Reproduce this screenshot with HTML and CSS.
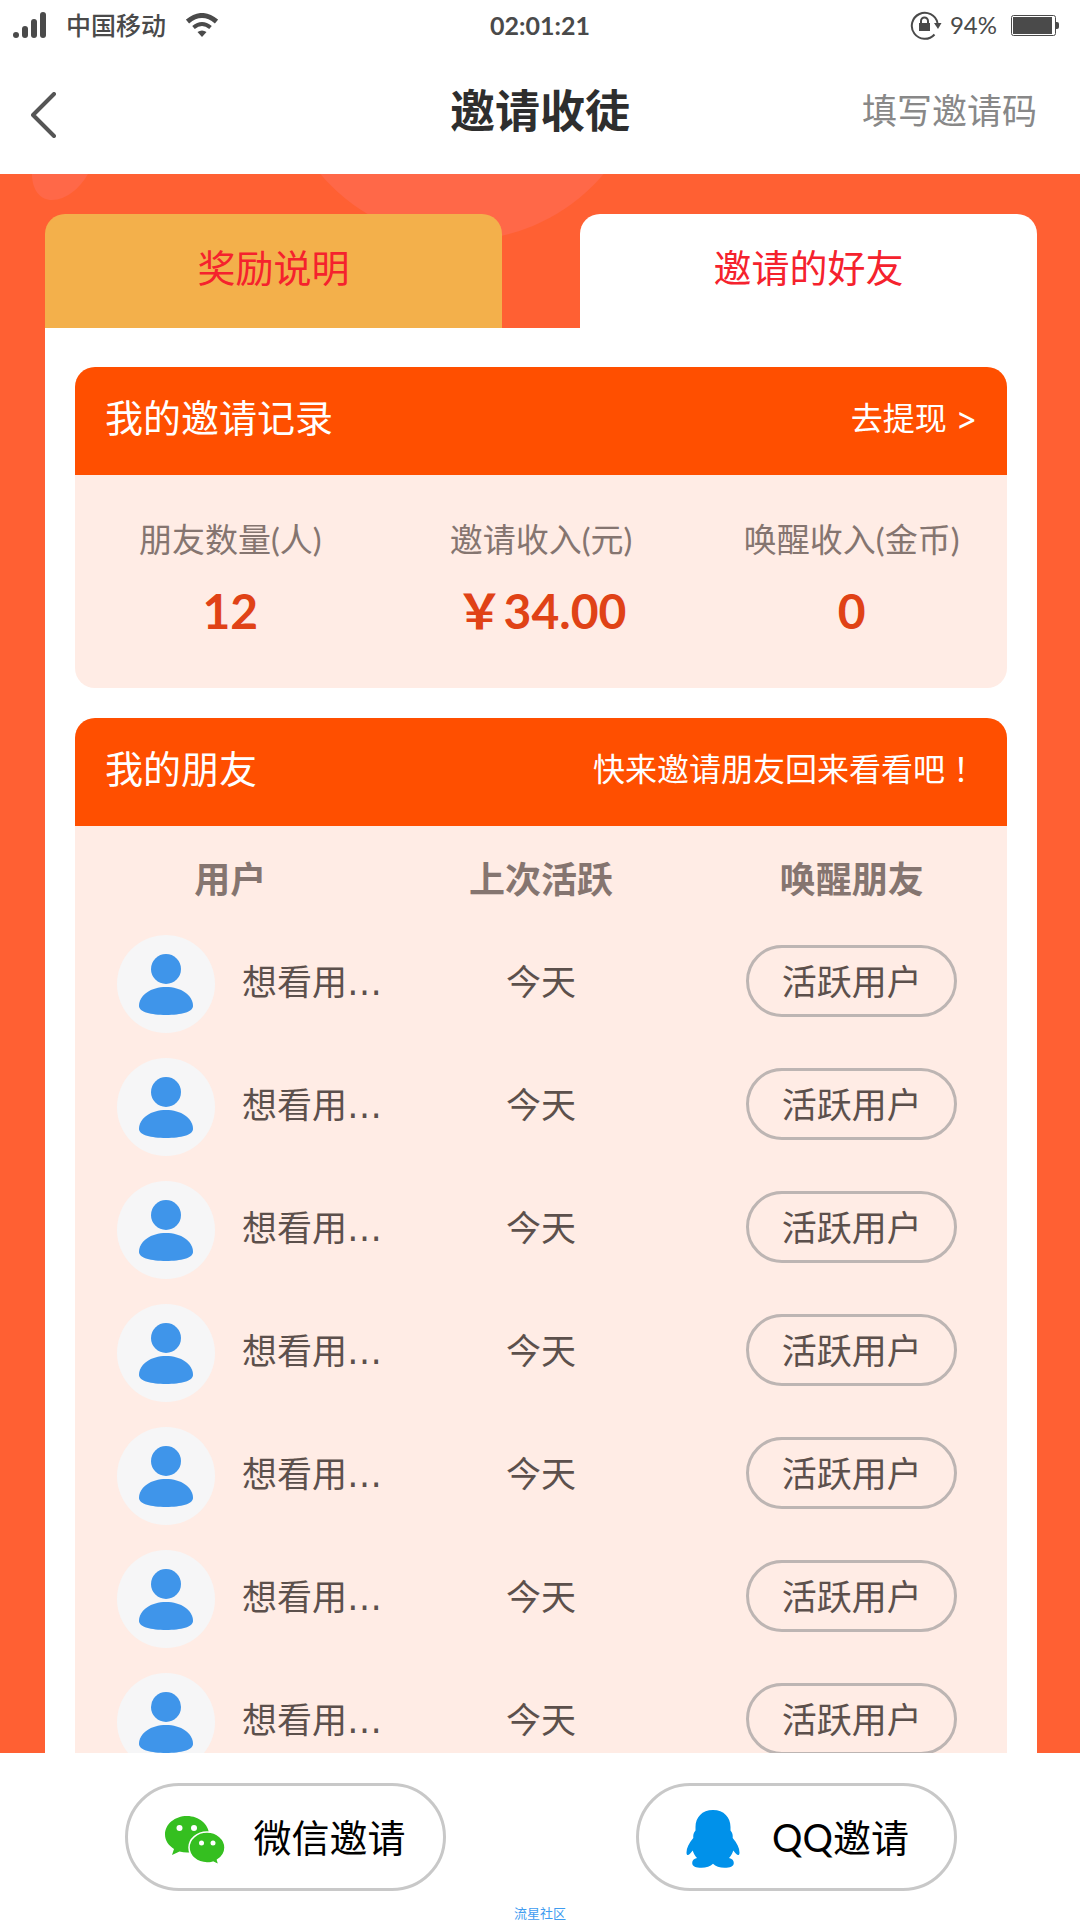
FILE: index.html
```html
<!DOCTYPE html>
<html lang="zh-CN">
<head>
<meta charset="utf-8">
<meta name="viewport" content="width=device-width">
<title>邀请收徒</title>
<link rel="stylesheet" href="styles.css">
</head>
<body>
<svg class="sprite" aria-hidden="true">
  <symbol id="avatar" viewBox="0 0 98 98">
    <circle cx="49" cy="49" r="49" fill="#f6f6f7"/>
    <circle cx="49" cy="34" r="15" fill="#3f95ea"/>
    <path d="M22 71C22 60 34 52 49 52s27 8 27 19c0 6-12 9-27 9s-27-3-27-9z" fill="#3f95ea"/>
  </symbol>
</svg>

<div class="status">
  <div class="status-side">
    <svg width="33" height="26" viewBox="0 0 33 26" fill="#4a4a4a" aria-hidden="true">
      <circle cx="3" cy="23" r="3"/><rect x="9" y="14" width="6" height="12" rx="3"/><rect x="18" y="7" width="6" height="19" rx="3"/><rect x="27" y="0" width="6" height="26" rx="3"/>
    </svg>
    <span class="carrier">中国移动</span>
    <svg width="32" height="24" viewBox="0 0 32 24" fill="none" stroke="#4a4a4a" stroke-width="5" aria-hidden="true">
      <path d="M1.500 8.500Q16-3.500 30.500 8.500"/><path d="M7.500 14.500Q16 7.500 24.500 14.500" stroke-width="4"/><path d="M11.500 19Q16 16 20.500 19L16 24z" fill="#4a4a4a" stroke="none"/>
    </svg>
  </div>
  <span class="time">02:01:21</span>
  <div class="status-side status-right">
    <svg width="32" height="30" viewBox="0 0 32 30" fill="none" stroke="#4a4a4a" stroke-width="2" aria-hidden="true">
      <path d="M24.500 24.500A13 13 0 1 1 27.500 13"/><path d="M24 13h7.500L28 19z" fill="#4a4a4a" stroke="none"/><rect x="9" y="13" width="11" height="8" fill="#4a4a4a" stroke="none"/><path d="M11 14v-3a3.500 3.500 0 0 1 7 0v3"/>
    </svg>
    <span class="percent">94%</span>
    <svg width="48" height="21" viewBox="0 0 48 21" aria-hidden="true">
      <rect x=".5" y=".5" width="44" height="20" rx="2" fill="#fff" stroke="#4a4a4a"/><rect x="2" y="2" width="39" height="17" fill="#4a4a4a"/><path d="M45 7h1a2 2 0 0 1 2 2v3a2 2 0 0 1-2 2h-1z" fill="#4a4a4a"/>
    </svg>
  </div>
</div>

<header class="nav">
  <button class="back" type="button" aria-label="返回">
    <svg width="26" height="46" viewBox="0 0 26 46" fill="none" stroke="#555" stroke-width="4" stroke-linecap="round" stroke-linejoin="round"><path d="M23 2L2 23l21 21"/></svg>
  </button>
  <h1>邀请收徒</h1>
  <a class="code" href="#">填写邀请码</a>
</header>

<main class="page">
  <svg class="bubbles" width="640" height="80" viewBox="0 0 640 80" fill="#ff6848" aria-hidden="true">
    <path d="M32 0c0 16 8 26 20 26 14 0 28-12 36-26z"/><circle cx="462" cy="-119" r="185"/>
  </svg>
  <div class="tabs">
    <button class="tab" type="button">奖励说明</button>
    <button class="tab tab-active" type="button">邀请的好友</button>
  </div>
  <div class="panel">
    <section class="card">
      <div class="card-head"><h2>我的邀请记录</h2><a class="withdraw" href="#">去提现 &gt;</a></div>
      <dl class="stats">
        <div><dt>朋友数量(人)</dt><dd>12</dd></div>
        <div><dt>邀请收入(元)</dt><dd>￥34.00</dd></div>
        <div><dt>唤醒收入(金币)</dt><dd>0</dd></div>
      </dl>
    </section>
    <section class="card">
      <div class="card-head"><h2>我的朋友</h2><p>快来邀请朋友回来看看吧<span class="mark" lang="zh-TW">！</span></p></div>
      <table class="friends">
        <thead><tr><th>用户</th><th>上次活跃</th><th>唤醒朋友</th></tr></thead>
        <tbody>
          <tr><td><div class="user"><svg class="avatar"><use href="#avatar"/></svg><span>想看用…</span></div></td><td>今天</td><td><button class="pill" type="button">活跃用户</button></td></tr>
          <tr><td><div class="user"><svg class="avatar"><use href="#avatar"/></svg><span>想看用…</span></div></td><td>今天</td><td><button class="pill" type="button">活跃用户</button></td></tr>
          <tr><td><div class="user"><svg class="avatar"><use href="#avatar"/></svg><span>想看用…</span></div></td><td>今天</td><td><button class="pill" type="button">活跃用户</button></td></tr>
          <tr><td><div class="user"><svg class="avatar"><use href="#avatar"/></svg><span>想看用…</span></div></td><td>今天</td><td><button class="pill" type="button">活跃用户</button></td></tr>
          <tr><td><div class="user"><svg class="avatar"><use href="#avatar"/></svg><span>想看用…</span></div></td><td>今天</td><td><button class="pill" type="button">活跃用户</button></td></tr>
          <tr><td><div class="user"><svg class="avatar"><use href="#avatar"/></svg><span>想看用…</span></div></td><td>今天</td><td><button class="pill" type="button">活跃用户</button></td></tr>
          <tr><td><div class="user"><svg class="avatar"><use href="#avatar"/></svg><span>想看用…</span></div></td><td>今天</td><td><button class="pill" type="button">活跃用户</button></td></tr>
        </tbody>
      </table>
    </section>
  </div>
</main>

<footer class="share">
  <div class="share-row">
    <button class="share-btn" type="button">
      <svg width="60" height="58" viewBox="0 -8 60 58" fill="#35bf20" aria-hidden="true">
        <path d="M22 0C10 0 0 8 0 18.500c0 6 3.500 11 9 14.500l-2 6 7.500-3.500c2.500.7 5 1 7.500 1 12 0 22-8 22-18S34 0 22 0z"/>
        <path d="M42 16c-10 0-18 7-18 15.500S32 47 42 47c2.200 0 4.200-.3 6-.9l6 2.900-1.500-5c4.500-2.900 7.500-7.400 7.500-12.500C60 23 52 16 42 16z" stroke="#fff" stroke-width="1.500"/>
        <g fill="#fff"><circle cx="14.500" cy="12" r="3"/><circle cx="29" cy="12" r="3"/><circle cx="36.500" cy="27" r="2.500"/><circle cx="48" cy="27" r="2.500"/></g>
      </svg>
      <span>微信邀请</span>
    </button>
    <button class="share-btn" type="button">
      <svg width="60" height="64" viewBox="1 -4 60 64" fill="#0091ea" aria-hidden="true">
        <path d="M30 1C19 1 12.500 8.500 12.500 18v3.500C10.500 24 10 26 10.300 29 6 34 3.500 39 3.500 43.500c0 3.500 2 2.800 3.200 1.500 1.500-1.500 2.300-2.500 3-3.500 1 3 2.500 5.500 4.300 7.500-3.200.6-4.800 2.700-4.800 5 0 3.300 3.800 4.800 9.300 4.800 4.700 0 9-1.500 11.500-4 2.500 2.500 6.800 4 11.500 4 5.500 0 9.300-1.500 9.300-4.800 0-2.300-1.600-4.400-4.800-5 1.800-2 3.300-4.500 4.300-7.500.7 1 1.500 2 3 3.500 1.200 1.300 3.200 2 3.200-1.500 0-4.500-2.500-9.500-6.800-14.500.3-3-.2-5-2.200-7.500V18C47.500 8.500 41 1 30 1z"/>
      </svg>
      <span>QQ邀请</span>
    </button>
  </div>
  <a class="source" href="#">流星社区</a>
</footer>
</body>
</html>
```
FILE: styles.css
```css
* { box-sizing: border-box; }

body {
  margin: 0;
  height: 100vh;
  display: flex;
  flex-direction: column;
  background: #fff;
  font-family: Lato, "Noto Sans CJK SC", sans-serif;
  overflow: hidden;
}

h1, h2, p, dl, dd { margin: 0; font-weight: 400; }
button { font-family: inherit; background: none; border: 0; padding: 0; }
a { text-decoration: none; color: inherit; }
svg { display: block; flex: none; }
.sprite { position: absolute; width: 0; height: 0; }

/* Status bar */
.status {
  display: grid;
  grid-template-columns: 1fr auto 1fr;
  align-items: center;
  height: 50px;
  color: #4a4a4a;
  font-size: 25px;
  line-height: 32px;
}
.status-side { display: flex; align-items: center; gap: 20px; padding-left: 13px; }
.status-right { justify-content: flex-end; gap: 8px; padding: 0 21px 0 0; }
.status-right .percent { margin-right: 6px; font-size: 24px; }
.carrier { font-weight: 500; }
.time { font-weight: 700; }

/* Title bar */
.nav {
  display: grid;
  grid-template-columns: 1fr auto 1fr;
  align-items: center;
  height: 124px;
  padding-bottom: 2px;
}
.back { justify-self: start; padding: 8px 0 0 31px; }
.nav h1 { font-size: 45px; line-height: 60px; font-weight: 700; color: #2e2e2e; }
.code { justify-self: end; padding: 0 43px 2px 0; font-size: 35px; line-height: 48px; color: #888; }

/* Scrolling content */
.page {
  position: relative;
  flex: 1;
  min-height: 0;
  overflow-y: auto;
  scrollbar-width: none;
  padding: 40px 43px 0 45px;
  background: #ff6033;
}
.bubbles { position: absolute; left: 0; top: 0; }
.tabs {
  position: relative;
  display: grid;
  grid-template-columns: 1fr 1fr;
  column-gap: 78px;
}
.tab {
  height: 114px;
  padding-bottom: 8px;
  border-radius: 20px 20px 0 0;
  background: #f3b04b;
  color: #f5222d;
  font-size: 38px;
  line-height: 52px;
}
.tab-active { background: #fff; }
.panel {
  display: flex;
  flex-direction: column;
  gap: 30px;
  padding: 39px 30px 30px;
  background: #fff;
}

.card { border-radius: 20px; overflow: hidden; background: #ffece5; }
.card-head {
  display: flex;
  justify-content: space-between;
  align-items: center;
  height: 108px;
  padding: 0 30px 8px;
  background: #ff4f00;
  color: #fff;
  font-size: 32px;
  line-height: 52px;
}
.card-head h2 { font-size: 38px; }
.withdraw { padding-top: 4px; font-family: Inter, "Noto Sans CJK SC", sans-serif; }
.mark { font-family: "Noto Sans CJK TC", sans-serif; }

.stats {
  display: grid;
  grid-template-columns: repeat(3, 1fr);
  padding: 40px 0 41px;
  text-align: center;
}
.stats dt { font-size: 33px; line-height: 48px; color: #857570; }
.stats dd { padding-top: 12px; font-size: 48px; line-height: 72px; font-weight: 700; color: #e04216; }

.friends {
  width: 100%;
  table-layout: fixed;
  border-collapse: collapse;
  text-align: center;
  font-size: 35px;
  line-height: 48px;
  color: #5c504c;
}
.friends th { height: 97px; padding: 8px 0 0; font-size: 36px; font-weight: 700; color: #857570; }
.friends td { height: 123px; padding: 0 0 8px; }
.friends td:first-child { padding-bottom: 2px; }
.user {
  display: flex;
  align-items: center;
  gap: 27px;
  padding-left: 42px;
  font-family: "DejaVu Sans", "Noto Sans CJK SC", sans-serif;
}
.user span { padding-bottom: 2px; }
.avatar { width: 98px; height: 98px; }
.pill {
  display: block;
  width: 211px;
  height: 72px;
  margin: 0 auto;
  padding-bottom: 2px;
  border: 3px solid #bdb5b3;
  border-radius: 36px;
  font-size: 35px;
  color: #5c504c;
}

/* Share bar */
.share { display: flex; flex-direction: column; padding-top: 30px; background: #fff; }
.share-row { display: flex; justify-content: space-between; padding: 0 123px 0 125px; }
.share-btn {
  display: flex;
  align-items: center;
  justify-content: center;
  gap: 28px;
  width: 321px;
  height: 108px;
  border: 3px solid #c8c8c8;
  border-radius: 54px;
  font-size: 38px;
  color: #000;
}
.share-btn span { padding-bottom: 4px; }
.source {
  align-self: center;
  margin-top: 15px;
  font-size: 13px;
  line-height: 14px;
  color: #3f9cf0;
}
```
